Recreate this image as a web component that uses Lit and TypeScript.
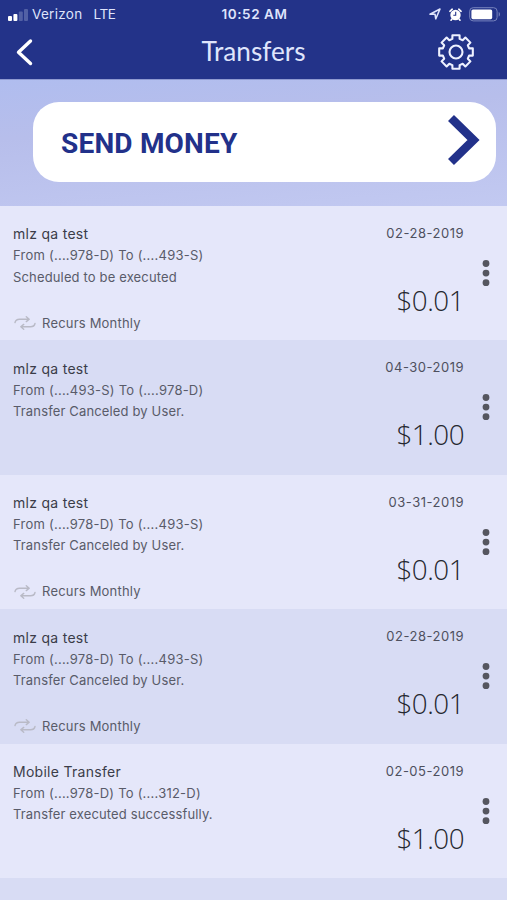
import { LitElement, html, css, nothing } from "lit";
import { customElement, property } from "lit/decorators.js";

interface Transfer {
  name: string;
  route: string;
  status: string;
  date: string;
  amount: string;
  recurs: boolean;
}

const transfers: Transfer[] = [
  { name: "mlz qa test", route: "From (....978-D) To (....493-S)", status: "Scheduled to be executed", date: "02-28-2019", amount: "$0.01", recurs: true },
  { name: "mlz qa test", route: "From (....493-S) To (....978-D)", status: "Transfer Canceled by User.", date: "04-30-2019", amount: "$1.00", recurs: false },
  { name: "mlz qa test", route: "From (....978-D) To (....493-S)", status: "Transfer Canceled by User.", date: "03-31-2019", amount: "$0.01", recurs: true },
  { name: "mlz qa test", route: "From (....978-D) To (....493-S)", status: "Transfer Canceled by User.", date: "02-28-2019", amount: "$0.01", recurs: true },
  { name: "Mobile Transfer", route: "From (....978-D) To (....312-D)", status: "Transfer executed successfully.", date: "02-05-2019", amount: "$1.00", recurs: false },
];

@customElement("status-bar")
export class StatusBar extends LitElement {
  static styles = css`
    :host {
      display: grid;
      grid-template-columns: 1fr auto 1fr;
      align-items: center;
      height: 27px;
      padding: 0 6px 0 8px;
      color: #dfe4fb;
      font: 400 13.5px/27px Inter, sans-serif;
    }
    svg { display: block; }
    .left, .right { display: flex; align-items: center; }
    .left, .time { padding-top: 1px; }
    .carrier { margin-left: 4px; letter-spacing: 0.3px; }
    .network { margin-left: 11px; letter-spacing: -0.4px; }
    .time { font-weight: 600; font-size: 13.5px; letter-spacing: 0.55px; }
    .right { justify-content: flex-end; }
    .alarm { margin: 0 7px 0 8px; }
  `;
  render() {
    return html`
      <div class="left">
        <svg width="20" height="12" viewBox="0 0 20 12">
          <rect x="0" y="7" width="4" height="5" rx="1" fill="#fff" />
          <rect x="5.4" y="5" width="4" height="7" rx="1" fill="#fff" />
          <rect x="10.8" y="2.5" width="4" height="9.5" rx="1" fill="#5260a5" />
          <rect x="16" y="0" width="4" height="12" rx="1" fill="#5260a5" />
        </svg>
        <span class="carrier">Verizon</span>
        <span class="network">LTE</span>
      </div>
      <span class="time">10:52 AM</span>
      <div class="right">
        <svg width="12" height="12" viewBox="0 0 12 12">
          <path d="M1 6.2 11 1 6.8 10.8 6 6.2Z" fill="none" stroke="#dfe4fb" stroke-width="1.6" stroke-linejoin="round" />
        </svg>
        <svg class="alarm" width="13" height="13" viewBox="0 0 13 13">
          <circle cx="6.5" cy="7" r="5.2" fill="#fff" />
          <path d="M.9 3.3 3.2 1.2M12.1 3.3 9.8 1.2M3 11 2 12.2M10 11l1 1.2" stroke="#fff" stroke-width="1.6" stroke-linecap="round" />
          <path d="M6.7 3.8v3.4H4.3" fill="none" stroke="#233389" stroke-width="1.1" />
        </svg>
        <svg width="32" height="15" viewBox="0 0 32 15">
          <rect x=".7" y=".7" width="27.4" height="13.2" rx="3.5" fill="none" stroke="#7783bd" stroke-width="1" />
          <rect x="2.4" y="2.4" width="20.8" height="9.8" rx="1.6" fill="#fff" />
          <path d="M29.7 5v4.6c1.7-.7 1.7-3.9 0-4.6" fill="#7783bd" />
        </svg>
      </div>
    `;
  }
}

@customElement("transfer-row")
export class TransferRow extends LitElement {
  @property({ attribute: false }) item!: Transfer;

  static styles = css`
    :host {
      display: grid;
      grid-template-columns: 1fr auto 43px;
      box-sizing: border-box;
      height: 134.4px;
      padding-left: 13px;
      color: #595b69;
      font: 400 13px/21px Inter, sans-serif;
      background: #e5e7fa;
    }
    :host(:nth-of-type(even)) { background: #d8dcf4; }
    svg { display: block; }
    .info { display: flex; flex-direction: column; padding-top: 17.4px; }
    .name { font-size: 14px; line-height: 22px; letter-spacing: 0.28px; color: #3b3d49; }
    .route { letter-spacing: 0.23px; }
    .route, .status { font-size: 13px; line-height: 21.3px; }
    .status { letter-spacing: 0.15px; }
    .recurs { display: flex; align-items: center; margin-top: 24.7px; gap: 6px; letter-spacing: 0.2px; }
    .recurs svg { margin-left: 1px; }
    .sums { display: flex; flex-direction: column; align-items: flex-end; padding-top: 17px; }
    .date { font-size: 13px; letter-spacing: 0.5px; color: #4e505e; }
    .amount { margin-top: 40px; font: 300 27.8px/32px "Open Sans", sans-serif; letter-spacing: -0.5px; color: #25272f; }
    .menu { margin-left: 17.5px; padding-top: 53px; }
  `;
  render() {
    const t = this.item;
    return html`
      <div class="info">
        <span class="name">${t.name}</span>
        <span class="route">${t.route}</span>
        <span class="status">${t.status}</span>
        ${t.recurs
          ? html`<div class="recurs">
              <svg width="22" height="14" viewBox="0 0 22 14" fill="none" stroke="#b9bac6" stroke-width="1.4" stroke-linecap="round" stroke-linejoin="round">
                <path d="M1 6.5C1.5 4.3 3 3.2 5.5 3.2H15M12.3 .8 15.2 3.2l-2.9 2.4M21 7.5c-.5 2.2-2 3.3-4.5 3.3H7M9.7 8.4 6.8 10.8l2.9 2.4" />
              </svg>
              <span>Recurs Monthly</span>
            </div>`
          : nothing}
      </div>
      <div class="sums">
        <span class="date">${t.date}</span>
        <span class="amount">${t.amount}</span>
      </div>
      <svg class="menu" width="8" height="28" viewBox="0 0 8 28" fill="#55565f">
        <circle cx="4" cy="4.5" r="3.4" />
        <circle cx="4" cy="14.1" r="3.4" />
        <circle cx="4" cy="23.7" r="3.4" />
      </svg>
    `;
  }
}

function gearPath(cx: number, cy: number): string {
  const teeth = 8;
  const points: string[] = [];
  const shape: [number, number][] = [[-15.5, 13.6], [-12, 17.2], [12, 17.2], [15.5, 13.6]];
  for (let i = 0; i < teeth; i++) {
    for (const [offset, radius] of shape) {
      const a = ((i * 360) / teeth + offset - 90) * (Math.PI / 180);
      points.push(`${(cx + radius * Math.cos(a)).toFixed(2)} ${(cy + radius * Math.sin(a)).toFixed(2)}`);
    }
  }
  return `M${points.join("L")}Z`;
}

@customElement("app-root")
export class AppRoot extends LitElement {
  static styles = css`
    :host {
      display: block;
      height: 900px;
      overflow: hidden;
      background: #d8dcf4;
    }
    svg { display: block; }
    header { height: 79px; background: #233389; }
    .nav {
      display: grid;
      grid-template-columns: 60px 1fr 60px;
      align-items: center;
      height: 49px;
    }
    .back { margin-left: 15px; }
    .gear { margin-left: -10px; }
    h1 {
      margin: 0 0 2px;
      text-align: center;
      font: 400 26.2px/40px Lato, sans-serif;
      color: #dfe5fc;
    }
    .hero {
      box-sizing: border-box;
      height: 127px;
      padding: 22px 11px 0 33px;
      border-top: 1px solid #8e99d0;
      background: linear-gradient(175deg, #b0bdef 0%, #b7beeb 35%, #c2c9f1 100%);
    }
    .send {
      display: flex;
      justify-content: space-between;
      align-items: center;
      box-sizing: border-box;
      width: 100%;
      height: 79.5px;
      padding: 0 15px 0 28px;
      border: 0;
      border-radius: 26px;
      background: #fff;
      color: #22318a;
      font: 700 28px/40px Roboto, sans-serif;
      letter-spacing: 0.2px;
    }
    .label { padding-top: 4px; }
    .chevron { margin-top: -3px; }
  `;
  render() {
    return html`
      <header>
        <status-bar></status-bar>
        <div class="nav">
          <svg class="back" width="19" height="28" viewBox="0 0 19 28">
            <path d="M15.5 3 3.5 14.3 15.5 25.5" fill="none" stroke="#fff" stroke-width="3.4" stroke-linecap="round" stroke-linejoin="round" />
          </svg>
          <h1>Transfers</h1>
          <svg class="gear" width="38" height="38" viewBox="0 0 38 38" fill="none" stroke="#eef1ff" stroke-width="2.1" stroke-linejoin="round">
            <path d=${gearPath(19, 19)} />
            <circle cx="19" cy="19" r="6.5" />
          </svg>
        </div>
      </header>
      <section class="hero">
        <button class="send">
          <span class="label">SEND MONEY</span>
          <svg class="chevron" width="34" height="52" viewBox="0 0 34 52">
            <path d="M4 4 26.5 26 4 48" fill="none" stroke="#22318a" stroke-width="8.5" />
          </svg>
        </button>
      </section>
      <main>${transfers.map((t) => html`<transfer-row .item=${t}></transfer-row>`)}</main>
    `;
  }
}
